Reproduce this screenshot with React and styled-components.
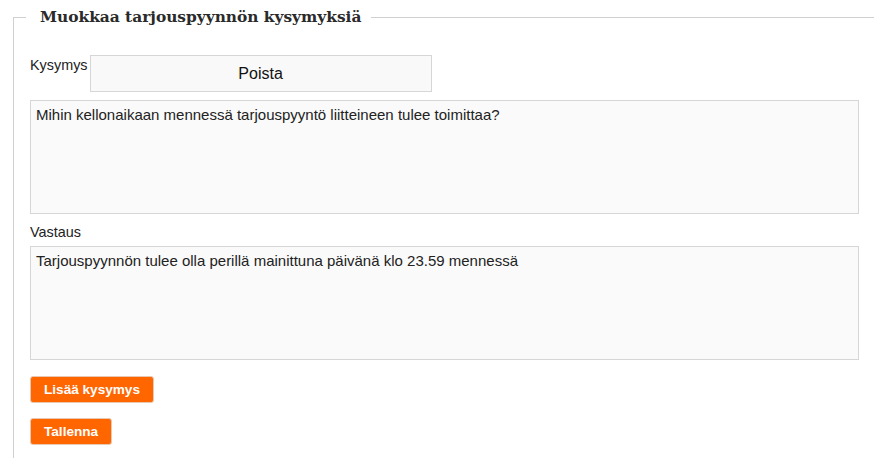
import React from 'react';
import styled, { createGlobalStyle } from 'styled-components';

const GlobalStyle = createGlobalStyle`
  body {
    margin: 0;
    background: #fff;
    overflow: hidden;
    font-family: "Liberation Sans", Arial, sans-serif;
    color: #222;
  }
`;

const Fieldset = styled.fieldset`
  margin: 8px 0 0 13px;
  width: 900px;
  padding: 15px 16px 20px 16px;
  border: 1px solid #d0d0d0;
  border-right: none;
  min-width: 0;
`;

const Legend = styled.legend`
  margin-left: -4px;
  padding: 0 10px 0 14px;
  font-family: "DejaVu Serif", Georgia, serif;
  font-weight: bold;
  font-size: 15.4px;
  color: #2a2a2a;
`;

const Form = styled.div`
  width: 829px;
  display: flex;
  flex-direction: column;
`;

const QuestionHead = styled.div`
  display: flex;
  align-items: flex-start;
  margin-top: 14px;
`;

const Label = styled.label`
  font-size: 14.4px;
  line-height: 16px;
  color: #222;
  margin-top: ${p => p.$top || 0}px;
  margin-bottom: ${p => p.$bottom || 0}px;
`;

const RemoveButton = styled.button`
  margin-left: 2px;
  width: 342px;
  height: 37px;
  box-sizing: border-box;
  background: #f9f9f9;
  border: 1px solid #d6d6d6;
  font-family: "Liberation Sans", Arial, sans-serif;
  font-size: 16px;
  color: #111;
  padding: 0;
`;

const TextArea = styled.textarea`
  display: block;
  box-sizing: border-box;
  width: 829px;
  height: 114px;
  margin-top: ${p => p.$top || 0}px;
  padding: 5px 5px;
  background: #fafafa;
  border: 1px solid #d6d6d6;
  font-family: "Liberation Sans", Arial, sans-serif;
  font-size: 15px;
  line-height: 18px;
  color: #222;
  resize: none;
  outline: none;
`;

const Actions = styled.div`
  display: flex;
  flex-direction: column;
  align-items: flex-start;
  gap: 15px;
  margin-top: 16px;
`;

const OrangeButton = styled.button`
  height: 27px;
  box-sizing: border-box;
  padding: 0 13px;
  background: #ff6600;
  border: 1px solid #e8c8b0;
  border-radius: 3px;
  color: #fff;
  font-family: "Liberation Sans", Arial, sans-serif;
  font-weight: bold;
  font-size: 13.6px;
`;

export default function App() {
  return (
    <>
      <GlobalStyle />
      <Fieldset>
        <Legend>Muokkaa tarjouspyynnön kysymyksiä</Legend>
        <Form>
          <QuestionHead>
            <Label $top={2}>Kysymys</Label>
            <RemoveButton type="button">Poista</RemoveButton>
          </QuestionHead>
          <TextArea
            $top={8}
            defaultValue="Mihin kellonaikaan mennessä tarjouspyyntö liitteineen tulee toimittaa?"
          />
          <Label $top={10} $bottom={6}>Vastaus</Label>
          <TextArea defaultValue="Tarjouspyynnön tulee olla perillä mainittuna päivänä klo 23.59 mennessä" />
          <Actions>
            <OrangeButton type="button">Lisää kysymys</OrangeButton>
            <OrangeButton type="button">Tallenna</OrangeButton>
          </Actions>
        </Form>
      </Fieldset>
    </>
  );
}
